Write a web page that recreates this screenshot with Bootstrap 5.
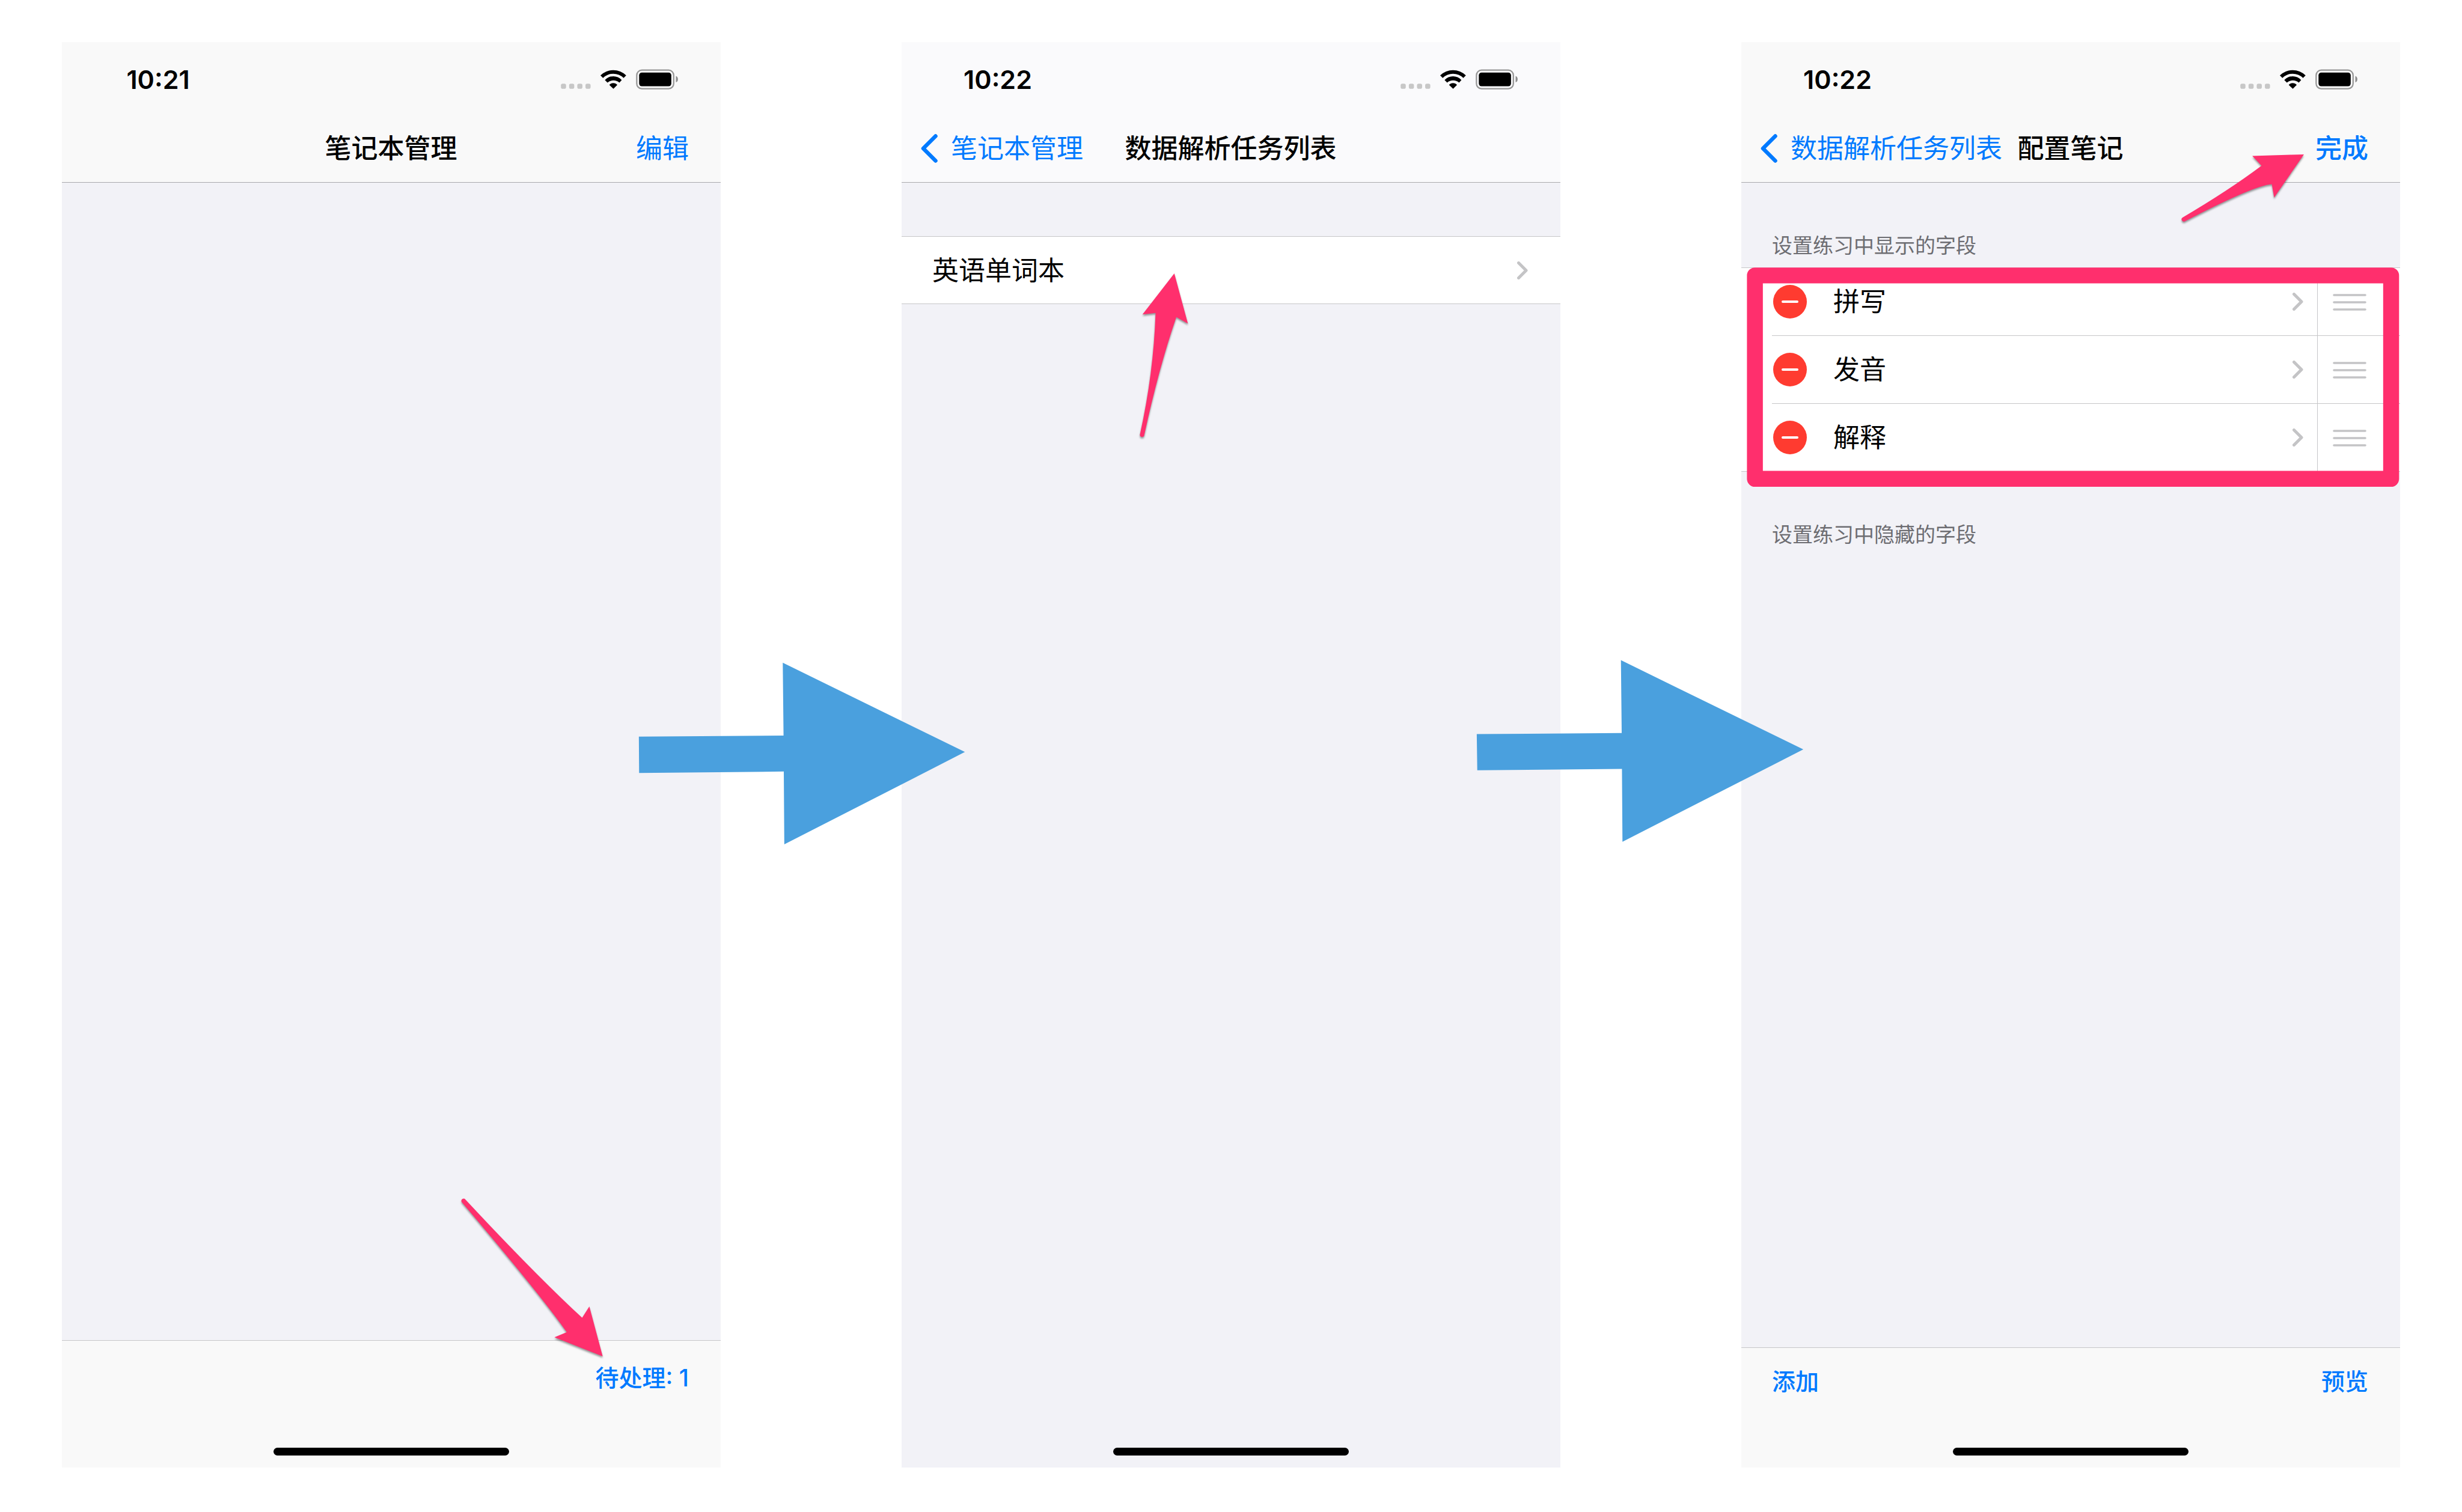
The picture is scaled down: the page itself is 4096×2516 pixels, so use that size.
<!DOCTYPE html>
<html lang="zh-CN">
<head>
<meta charset="utf-8">
<meta name="viewport" content="width=device-width, initial-scale=1">
<title>笔记本管理</title>
<link href="https://cdn.jsdelivr.net/npm/bootstrap@5.3.0/dist/css/bootstrap.min.css" rel="stylesheet">
<script src="https://cdn.jsdelivr.net/npm/bootstrap@5.3.0/dist/js/bootstrap.bundle.min.js"></script>
<style>
  :root { --ios-blue: #007aff; --ios-line: #c6c6c8; --ios-bg: #f2f2f7; }
  body { font-family: Inter, "Noto Sans CJK SC", sans-serif; font-size: 44px; line-height: 60px; color: #000; background: #fff; }
  .steps { padding: 70px 103px 74px; gap: 301px; }
  .phone { flex: 1 1 0; min-width: 0; background: var(--ios-bg); }
  .phone a, .phone button { color: var(--ios-blue); text-decoration: none; }
  .phone button { background: none; border: 0; padding: 0; font-weight: inherit; }
  .topbar { background: #f9f9f9; border-bottom: 1px solid #a9a9ac; }
  .topbar-cool { background: #fafafc; }
  .statusbar { height: 120px; padding: 4px 70px 0 50px; }
  .clock { width: 220px; font-size: 43px; font-weight: 600; }
  .status-icons { width: 196px; height: 34px; }
  .titlebar { display: grid; grid-template-columns: 1fr auto 1fr; column-gap: 24px; align-items: center; height: 113px; padding: 0 33px 0 32px; }
  .titlebar h1 { font-size: 44px; line-height: 60px; font-weight: 500; }
  .titlebar .text-end { padding-right: 20px; }
  .back { gap: 22px; white-space: nowrap; }
  .back svg { width: 28px; height: 48px; flex: none; }
  .mid { font-weight: 500; }
  .records { margin-top: 89px; }
  .records, .fields { background: #fff; border-top: 1px solid var(--ios-line); border-bottom: 1px solid var(--ios-line); }
  .records a { height: 111px; padding: 0 54px 0 51px; color: #000; }
  .chev { width: 18px; height: 30px; flex: none; }
  .caption { font-size: 34px; line-height: 44px; font-weight: 400; color: #6d6d72; padding: 83px 51px 14px; }
  .fields li { height: 113px; padding-left: 51px; }
  .fields li:last-child { height: 112px; }
  .field-body { border-bottom: 1px solid var(--ios-line); padding-left: 2px; }
  .fields li:last-child .field-body { border-bottom: 0; }
  .del, .del svg { width: 56px; height: 56px; display: block; }
  .field-link { padding: 0 23px 0 44px; }
  .phone .field-link { color: #000; }
  .phone .grip { width: 138px; padding-left: 25px; border-left: 1px solid var(--ios-line); }
  .grip svg { width: 56px; height: 30px; display: block; }
  .toolbar-ios { background: #f9f9f9; border-top: 1px solid var(--ios-line); font-size: 39px; font-weight: 500; }
  .tools { height: 112px; padding: 0 53px 0 51px; }
  .tools-tall { height: 124px; }
  .safe { height: 87px; padding-bottom: 20px; }
  .home { width: 392px; height: 13px; border-radius: 7px; background: #000; }
  .notes { position: absolute; inset: 0; width: 100%; height: 100%; overflow: visible; pointer-events: none; z-index: 2; }
  .pink { fill: #ff2f6d; filter: drop-shadow(0 3px 2px rgba(0,0,0,.4)); }
  .blue { fill: #4aa0de; }
</style>
</head>
<body>
<svg class="d-none" aria-hidden="true">
  <symbol id="status" viewBox="39 73 690 120">
    <g fill="#c7c7c7"><rect x="39" y="159" width="30" height="30" rx="10"/><rect x="87" y="159" width="30" height="30" rx="10"/><rect x="135" y="159" width="30" height="30" rx="10"/><rect x="183" y="159" width="30" height="30" rx="10"/></g>
    <path d="M271 110A107 107 0 0 1 422 110L407 125A86 86 0 0 0 286 125ZM297 137A67 67 0 0 1 396 137L382 152A54 54 0 0 0 312 152ZM323 166A30 30 0 0 1 370 166L347 189Z"/>
    <rect x="484" y="79" width="217" height="109" rx="30" fill="none" stroke="#979797" stroke-width="8"/>
    <rect x="498" y="93" width="189" height="81" rx="16"/>
    <path d="M714 114C722 117 726 124 726 133S722 148 714 151Z" fill="#8d8d8d"/>
  </symbol>
  <symbol id="chev-left" viewBox="0 0 28 48"><path d="M24.500 3.500L4 24L24.500 44.500" fill="none" stroke="#007aff" stroke-width="6.500" stroke-linecap="round" stroke-linejoin="round"/></symbol>
  <symbol id="chev-right" viewBox="0 0 18 30"><path d="M2.500 2.500L15 15L2.500 27.500" fill="none" stroke="#c4c4c6" stroke-width="5" stroke-linecap="round" stroke-linejoin="round"/></symbol>
  <symbol id="minus" viewBox="0 0 56 56"><circle cx="28" cy="28" r="28" fill="#ff3b30"/><rect x="14" y="26" width="28" height="4" rx="2" fill="#fff"/></symbol>
  <symbol id="bars" viewBox="0 0 56 30"><path d="M2 4H54M2 16H54M2 28H54" stroke="#c4c4c6" stroke-width="3.600" stroke-linecap="round"/></symbol>
</svg>

<main class="steps d-flex min-vh-100">

  <section class="phone position-relative d-flex flex-column">
    <header class="topbar">
      <div class="statusbar d-flex align-items-center justify-content-between">
        <div class="clock text-center">10:21</div>
        <svg class="status-icons"><use href="#status"/></svg>
      </div>
      <nav class="titlebar">
        <span></span>
        <h1 class="m-0">笔记本管理</h1>
        <a class="text-end" href="#edit">编辑</a>
      </nav>
    </header>
    <footer class="toolbar-ios mt-auto">
      <div class="tools tools-tall d-flex align-items-center justify-content-end"><button type="button">待处理: 1</button></div>
      <div class="safe d-flex align-items-end justify-content-center"><div class="home"></div></div>
    </footer>
    <svg class="notes" viewBox="0 0 1284 2778" preserveAspectRatio="xMinYMin meet" aria-hidden="true">
      <path class="pink" d="M785 2255Q925 2405 1014 2487L1028 2465L1054 2562L960 2525L984 2515Q935 2445 779 2261A4.500 4.500 0 0 1 785 2255Z"/>
      <path class="blue" d="M1124.500 1354L1406.500 1352L1405 1210L1760 1384L1408 1564L1407 1422L1125 1425Z"/>
    </svg>
  </section>

  <section class="phone position-relative d-flex flex-column">
    <header class="topbar topbar-cool">
      <div class="statusbar d-flex align-items-center justify-content-between">
        <div class="clock text-center">10:22</div>
        <svg class="status-icons"><use href="#status"/></svg>
      </div>
      <nav class="titlebar">
        <a class="back d-flex align-items-center" href="#notebooks"><svg><use href="#chev-left"/></svg>笔记本管理</a>
        <h1 class="m-0">数据解析任务列表</h1>
        <span></span>
      </nav>
    </header>
    <div class="records">
      <a class="d-flex align-items-center justify-content-between" href="#words">英语单词本<svg class="chev"><use href="#chev-right"/></svg></a>
    </div>
    <div class="safe mt-auto d-flex align-items-end justify-content-center"><div class="home"></div></div>
    <svg class="notes" viewBox="0 0 1284 2778" preserveAspectRatio="xMinYMin meet" aria-hidden="true">
      <path class="pink" d="M531.500 451L558 549L535.500 536Q501 636 473 766A4.200 4.200 0 0 1 464.500 765Q491 646 495 528L469.500 531Z"/>
      <path class="blue" d="M1121 1349L1403.500 1347L1402 1205L1757.500 1379L1405 1559L1404 1417L1122 1419.500Z"/>
    </svg>
  </section>

  <section class="phone position-relative d-flex flex-column">
    <header class="topbar">
      <div class="statusbar d-flex align-items-center justify-content-between">
        <div class="clock text-center">10:22</div>
        <svg class="status-icons"><use href="#status"/></svg>
      </div>
      <nav class="titlebar">
        <a class="back d-flex align-items-center" href="#tasks"><svg><use href="#chev-left"/></svg>数据解析任务列表</a>
        <h1 class="m-0">配置笔记</h1>
        <a class="mid text-end" href="#done">完成</a>
      </nav>
    </header>
    <h2 class="caption m-0">设置练习中显示的字段</h2>
    <ul class="fields list-unstyled m-0">
      <li class="d-flex"><div class="field-body d-flex flex-fill align-items-stretch">
        <button class="del align-self-center" type="button" aria-label="删除拼写"><svg><use href="#minus"/></svg></button>
        <a class="field-link d-flex flex-fill align-items-center justify-content-between" href="#spelling">拼写<svg class="chev"><use href="#chev-right"/></svg></a>
        <button class="grip" type="button" aria-label="移动拼写"><svg><use href="#bars"/></svg></button>
      </div></li>
      <li class="d-flex"><div class="field-body d-flex flex-fill align-items-stretch">
        <button class="del align-self-center" type="button" aria-label="删除发音"><svg><use href="#minus"/></svg></button>
        <a class="field-link d-flex flex-fill align-items-center justify-content-between" href="#sound">发音<svg class="chev"><use href="#chev-right"/></svg></a>
        <button class="grip" type="button" aria-label="移动发音"><svg><use href="#bars"/></svg></button>
      </div></li>
      <li class="d-flex"><div class="field-body d-flex flex-fill align-items-stretch">
        <button class="del align-self-center" type="button" aria-label="删除解释"><svg><use href="#minus"/></svg></button>
        <a class="field-link d-flex flex-fill align-items-center justify-content-between" href="#meaning">解释<svg class="chev"><use href="#chev-right"/></svg></a>
        <button class="grip" type="button" aria-label="移动解释"><svg><use href="#bars"/></svg></button>
      </div></li>
    </ul>
    <h2 class="caption m-0">设置练习中隐藏的字段</h2>
    <footer class="toolbar-ios mt-auto">
      <div class="tools d-flex align-items-center justify-content-between"><button type="button">添加</button><button type="button">预览</button></div>
      <div class="safe d-flex align-items-end justify-content-center"><div class="home"></div></div>
    </footer>
    <svg class="notes" viewBox="0 0 1284 2778" preserveAspectRatio="xMinYMin meet" aria-hidden="true">
      <rect x="26.500" y="455" width="1240" height="396.500" fill="none" stroke="#ff2f6d" stroke-width="31" stroke-linejoin="round"/>
      <path class="pink" d="M1096.500 219L1038.500 303L1034 277Q1000 279 865 349A4.200 4.200 0 0 1 860 342Q950 289 1014 241L996 222Z"/>
    </svg>
  </section>

</main>
</body>
</html>
